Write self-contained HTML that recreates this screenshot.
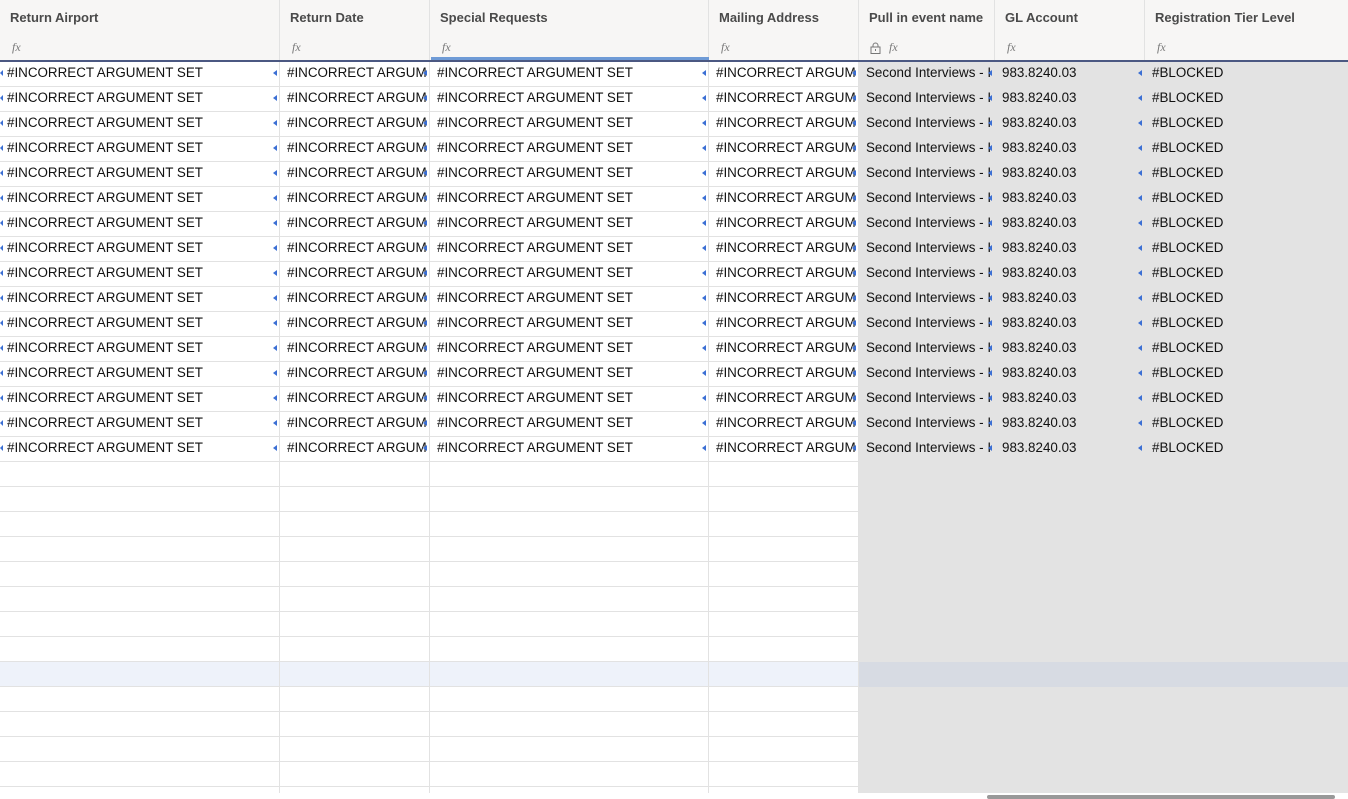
<!DOCTYPE html>
<html><head><style>
*{box-sizing:border-box;margin:0;padding:0}
body{width:1348px;height:799px;overflow:hidden;background:#fff;font-family:"Liberation Sans",sans-serif;position:relative}
.hdr{position:absolute;top:0;left:0;width:1348px;height:60px;background:#f7f6f5;display:flex}
.hc{position:relative;height:60px;border-right:1px solid #e2e2e2}
.hc .t{position:absolute;left:10px;top:10px;font-size:13px;font-weight:bold;color:#4a4a4a}
.hc .f{position:absolute;left:12px;top:40px;font-size:12px;font-style:italic;font-family:"Liberation Serif",serif;color:#777}
.bar{position:absolute;top:60px;left:0;width:1348px;height:2px;background:#4b5882}
.sel{position:absolute;top:57px;left:431px;width:278px;height:3px;background:#6f9bd6}
.body{position:absolute;top:62px;left:0;width:1348px;height:731px;overflow:hidden}
.r{display:flex;height:25px}
.c{position:relative;height:25px;border-right:1px solid #e2e2e2;border-bottom:1px solid #e2e2e2;font-size:13.4px;color:#111;padding-left:7px;line-height:22px;white-space:nowrap;overflow:hidden}
.g{background:#e3e3e3;border-color:#e3e3e3}
.tri:after{content:"";position:absolute;right:2px;top:8px;border-right:4px solid #3b6fd4;border-top:3px solid transparent;border-bottom:3px solid transparent}
.w1{width:280px}.w2{width:150px}.w3{width:279px}.w4{width:150px}.w5{width:136px}.w6{width:150px}.w7{width:203px;border-right:none}
.hl .c{background:#eef2fa}.hl .g{background:#d7dbe3;border-color:#d7dbe3}
.lb:before{content:"";position:absolute;left:0;top:8px;border-right:3px solid #3b6fd4;border-top:3px solid transparent;border-bottom:3px solid transparent}
.scroll{position:absolute;left:987px;top:795px;width:348px;height:4px;background:#999;border-radius:2px}
</style></head><body>
<div class="hdr">
<div class="hc w1"><span class="t">Return Airport</span><span class="f">fx</span></div>
<div class="hc w2"><span class="t">Return Date</span><span class="f">fx</span></div>
<div class="hc w3"><span class="t">Special Requests</span><span class="f">fx</span></div>
<div class="hc w4"><span class="t">Mailing Address</span><span class="f">fx</span></div>
<div class="hc w5"><span class="t">Pull in event name</span><svg style="position:absolute;left:11px;top:42px" width="11" height="12" viewBox="0 0 11 12"><rect x="1" y="5" width="9" height="6.5" fill="none" stroke="#777"/><path d="M3 5V3.5a2.5 2.5 0 0 1 5 0V5" fill="none" stroke="#777"/><rect x="5" y="7" width="1" height="2" fill="#777"/></svg><span class="f" style="left:30px">fx</span></div>
<div class="hc w6"><span class="t">GL Account</span><span class="f">fx</span></div>
<div class="hc w7"><span class="t">Registration Tier Level</span><span class="f">fx</span></div>
</div>
<div class="sel"></div>
<div class="bar"></div>
<div class="body" id="b"></div>
<div class="scroll"></div>
<script>
var h='';
var d='<div class="r"><div class="c w1 tri lb">#INCORRECT ARGUMENT SET</div><div class="c w2 tri">#INCORRECT ARGUM</div><div class="c w3 tri">#INCORRECT ARGUMENT SET</div><div class="c w4 tri">#INCORRECT ARGUM</div><div class="c w5 g tri">Second Interviews - I</div><div class="c w6 g tri">983.8240.03</div><div class="c w7 g">#BLOCKED</div></div>';
for(var i=0;i<16;i++)h+=d;
for(var i=0;i<14;i++){h+='<div class="r'+(i==8?' hl':'')+'"><div class="c w1"></div><div class="c w2"></div><div class="c w3"></div><div class="c w4"></div><div class="c w5 g"></div><div class="c w6 g"></div><div class="c w7 g"></div></div>';}
document.getElementById('b').innerHTML=h;
</script>
</body></html>
